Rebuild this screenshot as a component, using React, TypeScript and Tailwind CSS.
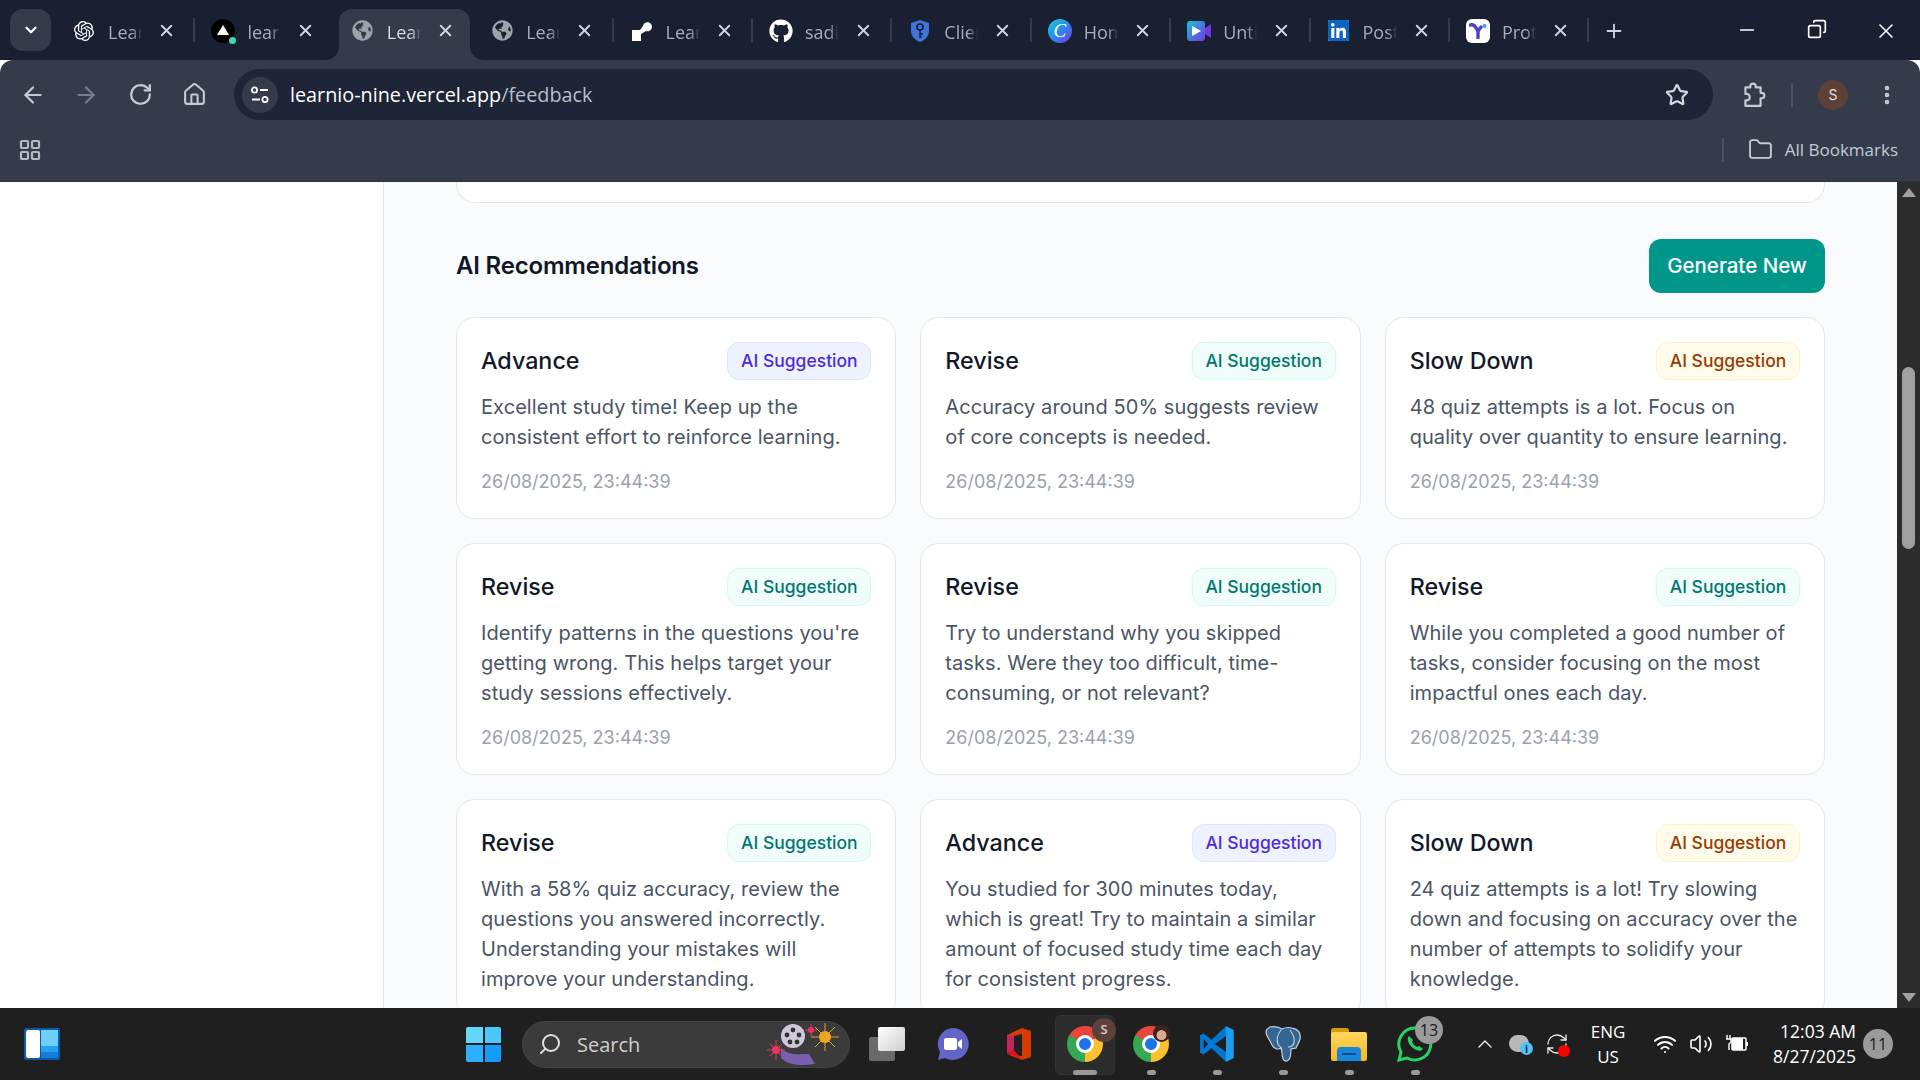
import { ArrowLeft, ArrowRight, ChevronDown, ChevronUp, Folder, Home, LayoutGrid, MoreVertical, Plus, RefreshCw, RotateCw, Search, Star, Volume2, Wifi, X, Copy, Minus } from "lucide-react";
import type { ReactNode } from "react";
import { FaGithub, FaGlobeAmericas, FaLinkedin } from "react-icons/fa";
import { SiOpenai } from "react-icons/si";

type Tab = { title: string; icon: ReactNode; active?: boolean; noSep?: boolean };

const tabs: Tab[] = [
	{ title: "Learnio", icon: <SiOpenai className="text-[20px] text-white" /> },
	{
		title: "learnio",
		noSep: true,
		icon: (
			<span className="relative flex h-6 w-6 items-center justify-center rounded-full bg-black">
				<span className="mb-[2px] h-0 w-0 border-x-[6px] border-b-[10px] border-x-transparent border-b-white" />
				<span className="absolute -right-[1px] bottom-[-1px] h-[7px] w-[7px] rounded-full bg-[#3ddbb0]" />
			</span>
		),
	},
	{ title: "Learnio", active: true, noSep: true, icon: <FaGlobeAmericas className="text-[21px] text-[#9ea3ab]" /> },
	{ title: "Learnio", icon: <FaGlobeAmericas className="text-[21px] text-[#9ea3ab]" /> },
	{
		title: "Learnio",
		icon: (
			<svg width="22" height="22" viewBox="0 0 22 22">
				<path d="M1 10h8l3-4a4.5 4.5 0 1 1 3 5l-5 3v7H1z" fill="#fff" />
			</svg>
		),
	},
	{ title: "sadia", icon: <FaGithub className="text-[24px] text-white" /> },
	{
		title: "Client",
		icon: (
			<svg width="20" height="24" viewBox="0 0 20 24">
				<path d="M10 1l9 3v8c0 5-4 9-9 11C5 21 1 17 1 12V4z" fill="#3f74d8" />
				<circle cx="10" cy="8" r="3" fill="none" stroke="#10203f" strokeWidth="1.6" />
				<path d="M10 11v8M10 15h3M10 18h2" stroke="#10203f" strokeWidth="1.4" />
			</svg>
		),
	},
	{
		title: "Home",
		icon: (
			<span className="flex h-6 w-6 items-center justify-center rounded-full bg-[linear-gradient(135deg,#1bd0d0,#2a8bf0_50%,#7b34e8)] font-['Liberation_Serif',serif] text-[19px] italic leading-none text-white">
				C
			</span>
		),
	},
	{
		title: "Untitled",
		icon: (
			<svg width="24" height="20" viewBox="0 0 24 20">
				<defs>
					<linearGradient id="vid" x1="0" y1="0" x2="1" y2="1">
						<stop offset="0" stopColor="#17c3d6" />
						<stop offset="1" stopColor="#7a35e6" />
					</linearGradient>
				</defs>
				<rect x="0" y="0" width="18" height="20" rx="3" fill="url(#vid)" />
				<path d="M18 7l6-4v14l-6-4z" fill="#6d3ae0" />
				<path d="M5 5l9 5-9 5z" fill="#fff" />
			</svg>
		),
	},
	{
		title: "Post",
		icon: (
			<span className="flex h-[21px] w-[21px] items-center justify-center overflow-hidden rounded-[2px] bg-white">
				<FaLinkedin className="text-[25px] text-[#0a66c2]" />
			</span>
		),
	},
	{
		title: "Proton",
		icon: (
			<span className="flex h-6 w-6 items-center justify-center rounded-[6px] bg-white">
				<svg width="18" height="16" viewBox="0 0 18 16">
					<path d="M1 2c3-1 5 1 6 3l2 3 3-4" fill="none" stroke="#4a45c8" strokeWidth="3.4" strokeLinecap="round" />
					<path d="M9 8v7" stroke="#4a45c8" strokeWidth="3.4" strokeLinecap="round" />
					<circle cx="15.5" cy="3" r="2" fill="#36a8f0" />
				</svg>
			</span>
		),
	},
];

type Rec = { title: string; body: string; tone: "indigo" | "teal" | "amber"; date?: boolean };

const recs: Rec[] = [
	{ title: "Advance", tone: "indigo", date: true, body: "Excellent study time! Keep up the consistent effort to reinforce learning." },
	{ title: "Revise", tone: "teal", date: true, body: "Accuracy around 50% suggests review of core concepts is needed." },
	{ title: "Slow Down", tone: "amber", date: true, body: "48 quiz attempts is a lot. Focus on quality over quantity to ensure learning." },
	{ title: "Revise", tone: "teal", date: true, body: "Identify patterns in the questions you're getting wrong. This helps target your study sessions effectively." },
	{ title: "Revise", tone: "teal", date: true, body: "Try to understand why you skipped tasks. Were they too difficult, time-consuming, or not relevant?" },
	{ title: "Revise", tone: "teal", date: true, body: "While you completed a good number of tasks, consider focusing on the most impactful ones each day." },
	// last row runs under the taskbar, its dates are out of view
	{ title: "Revise", tone: "teal", body: "With a 58% quiz accuracy, review the questions you answered incorrectly. Understanding your mistakes will improve your understanding." },
	{ title: "Advance", tone: "indigo", body: "You studied for 300 minutes today, which is great! Try to maintain a similar amount of focused study time each day for consistent progress." },
	{ title: "Slow Down", tone: "amber", body: "24 quiz attempts is a lot! Try slowing down and focusing on accuracy over the number of attempts to solidify your knowledge." },
];

const toneClass = {
	indigo: "bg-[#eef2ff] border-[#e0e7ff] text-[#4f2bd8]",
	teal: "bg-[#f0fdfa] border-[#ccfbf1] text-[#00786f]",
	amber: "bg-[#fffbeb] border-[#fef3c7] text-[#973c00]",
};

const ChromeLogo = ({ badge }: { badge: ReactNode }) => (
	<span className="relative block h-9 w-9 rounded-full bg-[conic-gradient(#e8453c_0deg,#e8453c_60deg,#fbc02d_60deg,#fbc02d_180deg,#34a853_180deg,#34a853_300deg,#e8453c_300deg)]">
		<span className="absolute left-[9px] top-[9px] h-[18px] w-[18px] rounded-full border-[3px] border-white bg-[#1a73e8]" />
		{badge}
	</span>
);

const TaskSlot = ({ children, dot, wide }: { children: ReactNode; dot?: boolean; wide?: boolean }) => (
	<div className="relative flex h-full w-[66px] items-center justify-center">
		{wide && <span className="absolute inset-x-[3px] top-[7px] bottom-[5px] rounded-[6px] border border-[#333] bg-[#2c2c2c]" />}
		<span className="relative">{children}</span>
		{dot && <span className={`absolute bottom-[5px] h-[5px] rounded-full bg-[#9a9a9a] ${wide ? "w-6" : "w-[9px]"}`} />}
	</div>
);

const RecCard = ({ rec }: { rec: Rec }) => (
	<div className="rounded-[19px] border border-[#e5e7eb] bg-white p-6">
		<div className="flex items-center justify-between">
			<h3 className="text-[23.3px] font-medium text-[#111827]">{rec.title}</h3>
			<span className={`flex h-[38px] w-[144px] items-center justify-center rounded-[12px] border text-[17.5px] font-medium ${toneClass[rec.tone]}`}>
				AI Suggestion
			</span>
		</div>
		<p className="mt-[12px] text-[20px] leading-[30px] tracking-[0.07px] text-[#4a5565]">{rec.body}</p>
		{rec.date && <p className="mt-[17px] text-[18px] leading-[25px] text-[#99a1af]">26/08/2025, 23:44:39</p>}
	</div>
);

export default function App() {
	return (
		<div className="flex h-screen flex-col overflow-hidden bg-white font-['Inter',sans-serif]">
			{/* Tab strip */}
			<div className="flex h-[60px] shrink-0 items-start bg-[#182032] font-['Open_Sans',sans-serif]">
				<div className="ml-[10px] mt-[9px] flex h-[42px] w-[41px] shrink-0 items-center justify-center rounded-[13px] bg-[#343c4c]">
					<ChevronDown className="h-[18px] w-[18px] text-white" strokeWidth={3} />
				</div>
				<div className="ml-[5px] flex h-full">
					{tabs.map((tab, i) => (
						<div key={i} className="relative flex h-full w-[139.4px] shrink-0 items-center">
							{tab.active && (
								<>
									<span className="absolute inset-x-[4px] bottom-0 top-[9px] rounded-t-[13px] bg-[#343c4c]" />
									<span className="absolute bottom-0 left-[-9px] h-[13px] w-[13px] bg-[radial-gradient(circle_at_0_0,#182032_12.5px,#343c4c_13px)]" />
									<span className="absolute bottom-0 right-[-9px] h-[13px] w-[13px] bg-[radial-gradient(circle_at_100%_0,#182032_12.5px,#343c4c_13px)]" />
								</>
							)}
							<span className="relative mt-[1px] flex w-[56px] shrink-0 items-center justify-center">{tab.icon}</span>
							<span className={`relative -ml-[4px] mt-[5px] w-[34px] overflow-hidden whitespace-nowrap text-[18px] [mask-image:linear-gradient(to_right,black_70%,transparent)] ${tab.active ? "text-[#d5d8de]" : "text-[#a6adbb]"}`}>
								{tab.title}
							</span>
							<X className="relative ml-[15px] h-[19px] w-[19px] text-[#d0d4dc]" strokeWidth={2.4} />
							{!tab.noSep && <span className="absolute right-0 top-[18px] h-[24px] w-[2px] bg-[#343c4c]" />}
						</div>
					))}
				</div>
				<div className="ml-[14px] mt-[20px]">
					<Plus className="h-[22px] w-[22px] text-[#d0d4dc]" strokeWidth={2} />
				</div>
				<div className="ml-auto mt-[19px] flex text-white">
					<div className="flex w-[70px] justify-center"><Minus className="h-[22px] w-[22px]" strokeWidth={1.6} /></div>
					<div className="flex w-[70px] justify-center"><Copy className="h-[20px] w-[20px] -scale-x-100" strokeWidth={2} /></div>
					<div className="flex w-[68px] justify-center"><X className="h-[24px] w-[24px]" strokeWidth={1.6} /></div>
				</div>
			</div>

			{/* Toolbar */}
			<div className="flex h-[62px] shrink-0 items-center rounded-t-[13px] bg-[#343c4c] pt-[7px] text-[#c5cad4]">
				<ArrowLeft className="ml-[20px] h-[26px] w-[26px]" strokeWidth={2} />
				<ArrowRight className="ml-[27px] h-[26px] w-[26px] text-[#788090]" strokeWidth={2} />
				<RotateCw className="ml-[29px] h-[25px] w-[25px]" strokeWidth={2.2} />
				<Home className="ml-[29px] h-[25px] w-[25px]" strokeWidth={2} />
				<div className="ml-[27px] flex h-[51px] w-[1479px] shrink-0 items-center rounded-full bg-[#1d2536] pl-[8px]">
					<span className="flex h-9 w-9 items-center justify-center rounded-full bg-[#343c4c]">
						<svg width="20" height="20" viewBox="0 0 20 20" fill="none" stroke="#fff" strokeWidth="1.8">
							<circle cx="4.5" cy="5" r="2.6" />
							<path d="M10 5h8M2 14.5h8" />
							<circle cx="15" cy="14.5" r="2.6" />
						</svg>
					</span>
					<span className="ml-[12px] font-['Open_Sans',sans-serif] text-[19.8px] text-white">
						learnio-nine.vercel.app<span className="text-[#b9bec9]">/feedback</span>
					</span>
					<Star className="ml-auto mr-[24px] h-[24px] w-[24px] text-[#d5d8de]" strokeWidth={2.2} />
				</div>
				<svg className="ml-[27px]" width="26" height="26" viewBox="0 0 24 24" fill="none" stroke="currentColor" strokeWidth="2" strokeLinejoin="round">
					<path d="M5 5h4.5V4a2.5 2.5 0 0 1 5 0v1H19v5h1a2.5 2.5 0 0 1 0 5h-1v7H5v-5h1a3 3 0 0 0 0-6H5z" />
				</svg>
				<span className="ml-[25px] h-[24px] w-[2px] bg-[#4a5261]" />
				<span className="ml-[25px] flex h-[30px] w-[30px] items-center justify-center rounded-full bg-[#5d4037] text-[14px] text-[#e6e0dc]">S</span>
				<MoreVertical className="ml-[27px] h-[24px] w-[24px]" strokeWidth={2.6} />
			</div>

			{/* Bookmarks */}
			<div className="flex h-[60px] shrink-0 items-center border-b border-[#2d3340] bg-[#343c4c] pb-[4px] font-['Open_Sans',sans-serif] text-[#c5cad4]">
				<LayoutGrid className="ml-[18px] h-[24px] w-[24px] text-[#b6b9c0]" strokeWidth={2.2} />
				<span className="ml-auto h-[24px] w-[2px] bg-[#4a5261]" />
				<Folder className="ml-[24px] h-[25px] w-[25px]" strokeWidth={1.8} />
				<span className="ml-[12px] mr-[22px] text-[17px]">All Bookmarks</span>
			</div>

			{/* Page */}
			<div className="flex min-h-0 flex-1">
				<div className="w-[384px] shrink-0 border-r border-[#e5e7eb] bg-white" />
				<main className="min-w-0 flex-1 overflow-hidden bg-[#f9fafb] px-[72px]">
					<div className="h-[21px] rounded-b-[19px] border border-t-0 border-[#e5e7eb] bg-white" />
					<div className="mt-[36px] flex items-center justify-between">
						<h2 className="text-[24px] font-semibold tracking-[-0.2px] text-[#101828]">AI Recommendations</h2>
						<button className="h-[54px] w-[176px] rounded-[12px] bg-[#009689] text-[20.5px] font-medium text-white">Generate New</button>
					</div>
					<div className="mt-[24px] grid grid-cols-3 gap-6">
						{recs.map((rec, i) => (
							<RecCard key={i} rec={rec} />
						))}
					</div>
				</main>
				{/* Scrollbar */}
				<div className="flex w-[23px] shrink-0 flex-col items-center bg-[#2c2c2c] pt-[6px]">
					<span className="h-0 w-0 border-x-[7px] border-b-[9px] border-x-transparent border-b-[#a0a0a0]" />
					<span className="mt-[170px] h-[182px] w-[13px] rounded-full bg-[#a0a0a0]" />
					<span className="mt-auto mb-[6px] h-0 w-0 border-x-[7px] border-t-[9px] border-x-transparent border-t-[#a0a0a0]" />
				</div>
			</div>

			{/* Taskbar */}
			<div className="flex h-[72px] shrink-0 items-center bg-[#1f1f1f] font-['Open_Sans',sans-serif] text-white">
				<div className="ml-[24px] flex h-[32px] w-[36px] gap-[1px] rounded-[2px] bg-[#0b5aa8] p-[2px]">
					<span className="w-[14px] rounded-[2px] bg-white" />
					<span className="flex flex-1 flex-col">
						<span className="flex-1 bg-[#6fd0fb]" />
						<span className="h-[6px] bg-[#2a9df4]" />
						<span className="h-[6px] bg-[#0f7fd8]" />
					</span>
				</div>
				<div className="ml-[406px] grid h-[35px] w-[35px] grid-cols-2 gap-[2px]">
					<span className="rounded-tl-[2px] bg-[#63d8fb]" />
					<span className="rounded-tr-[2px] bg-[#4cc6fb]" />
					<span className="rounded-bl-[2px] bg-[#2bb1fb]" />
					<span className="rounded-br-[2px] bg-[#159cfb]" />
				</div>
				<div className="ml-[21px] flex h-[47px] w-[328px] items-center rounded-full border border-[#454545] bg-[#3b3b3b] pl-[15px]">
					<Search className="h-[24px] w-[24px] -scale-x-100 text-[#e0e0e0]" strokeWidth={2} />
					<span className="ml-[15px] mt-[1px] text-[20px] text-[#cfcfcf]">Search</span>
					<svg className="ml-auto mr-[6px]" width="76" height="44" viewBox="0 0 76 44">
						<path d="M14 26c8 8 18 6 28 6l6 10c-12 2-26 2-34-6z" fill="#7a5fb0" />
						<circle cx="26" cy="14" r="12" fill="#cfc8d8" />
						<circle cx="26" cy="8" r="2.4" fill="#333" />
						<circle cx="20" cy="13" r="2.4" fill="#333" />
						<circle cx="32" cy="13" r="2.4" fill="#333" />
						<circle cx="23" cy="20" r="2.4" fill="#333" />
						<circle cx="30" cy="20" r="2.4" fill="#333" />
						<circle cx="58" cy="15" r="6" fill="#f5a623" />
						<path d="M58 1v28M44 15h28M48 5l20 20M68 5L48 25" stroke="#e8a020" strokeWidth="1" />
						<circle cx="9" cy="28" r="4" fill="#e8365f" />
						<path d="M9 18v20M0 28h18M3 22l12 12M15 22L3 34" stroke="#e8365f" strokeWidth="1" />
						<circle cx="44" cy="8" r="3" fill="#e8365f" />
						<path d="M44 2v12M38 8h12" stroke="#e8365f" strokeWidth="1" />
					</svg>
				</div>
				<div className="ml-[4px] flex h-full">
					<TaskSlot>
						<span className="relative block h-[34px] w-[36px]">
							<span className="absolute bottom-0 left-0 h-[24px] w-[26px] rounded-[2px] bg-[#6a6a6a]" />
							<span className="absolute right-0 top-0 h-[24px] w-[27px] rounded-[2px] bg-[linear-gradient(135deg,#fff,#cfcfcf)]" />
						</span>
					</TaskSlot>
					<TaskSlot>
						<svg className="-ml-[2px]" width="34" height="34" viewBox="0 0 34 34">
							<path d="M17 1a16 16 0 1 1-7 30l-7 2 2-8A16 16 0 0 1 17 1z" fill="#6264c7" />
							<rect x="9" y="11" width="13" height="12" rx="2" fill="#fff" />
							<path d="M23 15l4-3v10l-4-3z" fill="#fff" />
						</svg>
					</TaskSlot>
					<TaskSlot>
						<svg width="26" height="32" viewBox="0 0 26 32">
							<path d="M1 7l15-7 9 3v26l-9 3-15-6 15 2V6L8 8v14l-7 3z" fill="#d83b01" />
							<path d="M1 7l7 1v14l-7 3z" fill="#c2255c" />
							<path d="M1 25l7-3 8 10z" fill="#e81123" />
						</svg>
					</TaskSlot>
					<TaskSlot wide dot>
						<ChromeLogo badge={<span className="absolute -right-[13px] -top-[8px] flex h-6 w-6 items-center justify-center rounded-full bg-[#5d4037] text-[13px] font-semibold text-[#d8d0cc]">S</span>} />
					</TaskSlot>
					<TaskSlot dot>
						<ChromeLogo badge={<span className="absolute -right-[1px] -top-[1px] h-[17px] w-[17px] rounded-full bg-[radial-gradient(circle_at_50%_60%,#e0a890_35%,#3a2420_40%)]" />} />
					</TaskSlot>
					<TaskSlot dot>
						<svg width="36" height="36" viewBox="0 0 100 100">
							<path d="M96 11 75 1 35 38 13 21 3 26v48l10 5 22-17 40 37 21-10z" fill="#0078d4" />
							<path d="M75 1l21 10v78L75 99z" fill="#1f9cf0" />
							<path d="M75 28 44 50l31 22z" fill="#1f1f1f" />
							<path d="M13 36 25 50 13 64z" fill="#1f1f1f" />
						</svg>
					</TaskSlot>
					<TaskSlot dot>
						<svg width="36" height="36" viewBox="0 0 36 36">
							<path d="M5 1c5-1 9 0 12 2 2-1 6-2 10-1 6 1 9 5 8 11-1 4-3 6-4 9l-5 1c0 4 0 11-4 12-4 1-5-4-5-9l-1-4c-3 2-7 1-9-3C5 14 1 10 1 6c0-3 2-4 4-5z" fill="#336791" stroke="#c8d4e0" strokeWidth="1.2" />
							<path d="M16 4c-4 5-5 9-3 14 1 2 3 3 4 6M25 4c3 4 5 8 4 13-1 3-4 4-6 4" fill="none" stroke="#c8d4e0" strokeWidth="1.1" />
						</svg>
					</TaskSlot>
					<TaskSlot dot>
						<span className="relative block h-[33px] w-[36px]">
							<span className="absolute left-0 top-0 h-[10px] w-[18px] rounded-t-[3px] bg-[#d99a10]" />
							<span className="absolute inset-x-0 bottom-0 top-[4px] rounded-[2px] bg-[linear-gradient(#ffd75e,#f2b822)]" />
							<span className="absolute bottom-0 left-[6px] right-[6px] flex h-[14px] items-center justify-center rounded-t-[4px] bg-[#1a86d9]">
								<span className="h-[2px] w-[14px] bg-[#0a4f8f]" />
							</span>
						</span>
					</TaskSlot>
					<TaskSlot dot>
						<span className="relative block h-[36px] w-[36px]">
							<svg width="36" height="36" viewBox="0 0 36 36">
								<path d="M18 2a16 16 0 1 1-8 30l-8 2 2-8A16 16 0 0 1 18 2z" fill="none" stroke="#25d366" strokeWidth="3" />
								<path d="M12 10c-3 3 0 9 4 12s8 4 10 1l-4-3-2 1c-2-1-4-3-5-5l1-2z" fill="#25d366" />
							</svg>
							<span className="absolute -right-[10px] -top-[10px] flex h-7 w-7 items-center justify-center rounded-full bg-[#9a9a9a] text-[16px] text-[#1a1a1a]">13</span>
						</span>
					</TaskSlot>
				</div>
				<div className="ml-[19px] flex items-center">
					<div className="flex w-9 justify-center"><ChevronUp className="h-[24px] w-[24px] text-[#eee]" strokeWidth={1.4} /></div>
					<div className="flex w-9 justify-center">
						<span className="relative block h-[22px] w-[24px]">
							<span className="absolute left-0 top-[2px] h-[17px] w-[20px] rounded-full bg-[#b8b8b8]" />
							<span className="absolute bottom-0 right-0 flex h-[13px] w-[13px] items-center justify-center rounded-full bg-[#4fc3f7] text-[10px] font-bold leading-none text-[#123]">i</span>
						</span>
					</div>
					<div className="flex w-9 justify-center">
						<span className="relative block">
							<RefreshCw className="h-[24px] w-[24px] text-[#eee]" strokeWidth={1.3} />
							<span className="absolute -bottom-[1px] -right-[1px] h-3 w-3 rounded-full bg-[#ff0000]" />
						</span>
					</div>
					<div className="ml-[5px] flex w-[56px] flex-col items-center text-[17px] leading-[25px]">
						<span>ENG</span>
						<span>US</span>
					</div>
					<div className="ml-[11px] flex w-9 justify-center"><Wifi className="h-[24px] w-[24px]" strokeWidth={2} /></div>
					<div className="flex w-9 justify-center"><Volume2 className="h-[24px] w-[24px]" strokeWidth={1.6} /></div>
					<div className="flex w-9 items-center justify-center">
						<svg width="24" height="20" viewBox="0 0 24 20">
							<rect x="7" y="4" width="14" height="12" rx="1" fill="none" stroke="#fff" strokeWidth="1.5" />
							<rect x="7" y="4" width="11" height="12" fill="#fff" />
							<rect x="21" y="8" width="2" height="4" fill="#fff" />
							<path d="M2 1v4M5 1v4M1 5h5v3l-2 2v6" stroke="#fff" strokeWidth="1.4" fill="none" />
						</svg>
					</div>
					<div className="flex w-[101px] flex-col items-end text-[17.5px] leading-[25px]">
						<span>12:03 AM</span>
						<span>8/27/2025</span>
					</div>
					<span className="ml-[7px] flex h-[30px] w-[30px] items-center justify-center rounded-full bg-[#9a9a9a] text-[16px] text-[#1a1a1a]">11</span>
				</div>
			</div>
		</div>
	);
}
